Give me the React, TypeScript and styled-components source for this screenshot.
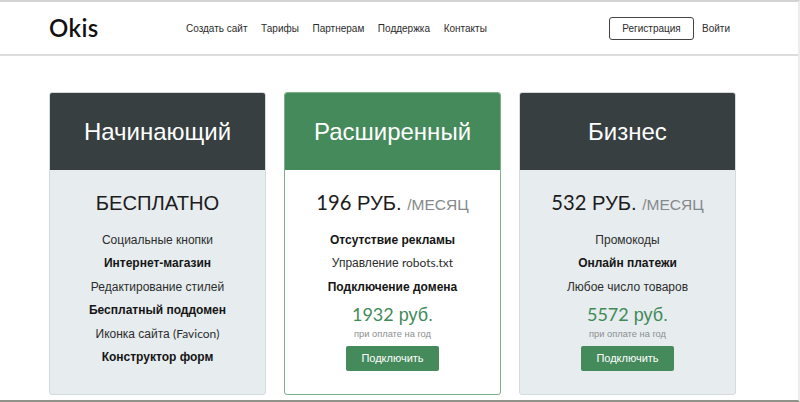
import React from "react";
import styled, { createGlobalStyle } from "styled-components";

const Global = createGlobalStyle`
  html, body { margin: 0; padding: 0; background: #fff; }
  body { width: 800px; height: 402px; overflow: hidden; font-family: "Liberation Sans", Arial, sans-serif; color: #1c1c1c; }
  * { box-sizing: border-box; }
`;

const Page = styled.div`
  width: 800px;
  height: 402px;
  display: flex;
  flex-direction: column;
  border-top: 2px solid #d4d4d4;
  border-bottom: 2px solid #8f9389;
  border-right: 2px solid #ececec;
  overflow: hidden;
`;

const Header = styled.header`
  height: 54px;
  flex: none;
  display: flex;
  align-items: center;
  padding: 0 68px 0 49px;
  border-bottom: 2px solid #dcdcdc;
`;

const Logo = styled.div`
  font-family: Lato, sans-serif;
  font-size: 24px;
  font-weight: 600;
  color: #111;
  width: 137px;
  letter-spacing: 0.4px;
  margin-top: -2px;
`;

const Nav = styled.nav`
  display: flex;
  gap: 13.6px;
  font-size: 10px;
  color: #2c2c2c;
`;

const NavLink = styled.a`
  display: block;
`;

const Actions = styled.div`
  margin-left: auto;
  display: flex;
  align-items: center;
  gap: 8px;
  font-size: 10px;
  color: #2c2c2c;
`;

const RegisterButton = styled.a`
  width: 85px;
  height: 23px;
  display: flex;
  align-items: center;
  justify-content: center;
  border: 1px solid #444;
  border-radius: 3px;
`;

const Plans = styled.main`
  display: grid;
  grid-template-columns: repeat(3, 217px);
  gap: 18px;
  padding: 36px 0 0 49px;
`;

const Plan = styled.section<{ $featured?: boolean }>`
  height: 303px;
  display: flex;
  flex-direction: column;
  border-radius: 3px;
  overflow: hidden;
  text-align: center;
  background: ${(p) => (p.$featured ? "#fff" : "#e7ecef")};
  border: 1px solid ${(p) => (p.$featured ? "#7fae8d" : "#d5dadc")};
`;

const PlanHead = styled.div<{ $featured?: boolean }>`
  height: 78px;
  flex: none;
  margin: -1px -1px 0;
  padding-top: 1px;
  display: flex;
  align-items: center;
  justify-content: center;
  font-size: 24px;
  color: #fff;
  background: ${(p) => (p.$featured ? "#458a5a" : "#373f41")};
`;

const PlanBody = styled.div`
  display: flex;
  flex-direction: column;
  align-items: center;
  padding-top: 21px;
`;

const Price = styled.div`
  height: 24px;
  font-size: 20.2px;
  line-height: 24px;
  color: #1c1c1c;
  margin-bottom: 14px;
  white-space: nowrap;
`;

const Period = styled.span`
  font-size: 15.5px;
  color: #85898b;
`;

const Latin = styled.span`
  font-family: Lato, sans-serif;
  line-height: 1;
`;

const Feature = styled.div<{ $bold?: boolean }>`
  height: 23.4px;
  font-size: 12px;
  line-height: 23.4px;
  font-weight: ${(p) => (p.$bold ? 700 : 400)};
  color: ${(p) => (p.$bold ? "#151515" : "#2c2c2c")};
`;

const YearPrice = styled.div`
  height: 22px;
  font-size: 18px;
  line-height: 22px;
  margin-top: 5px;
  color: #3f8a57;
`;

const YearNote = styled.div`
  font-size: 9.3px;
  line-height: 12px;
  margin-top: 2px;
  color: #8b8f90;
`;

const ConnectButton = styled.a`
  width: 93px;
  height: 25px;
  margin-top: 6px;
  padding-bottom: 1px;
  display: flex;
  align-items: center;
  justify-content: center;
  font-size: 11px;
  color: #fff;
  background: #458a5a;
  border-radius: 2px;
`;

type F = { t: string; latin?: string; b?: boolean };
type P = { title: string; amount?: string; price: string; period?: string; features: F[]; year?: string; featured?: boolean };

const plans: P[] = [
  {
    title: "Начинающий",
    price: "БЕСПЛАТНО",
    features: [
      { t: "Социальные кнопки" },
      { t: "Интернет-магазин", b: true },
      { t: "Редактирование стилей" },
      { t: "Бесплатный поддомен", b: true },
      { t: "Иконка сайта ", latin: "(Favicon)" },
      { t: "Конструктор форм", b: true },
    ],
  },
  {
    title: "Расширенный",
    amount: "196",
    price: " РУБ.",
    period: "/МЕСЯЦ",
    featured: true,
    year: "1932",
    features: [
      { t: "Отсутствие рекламы", b: true },
      { t: "Управление ", latin: "robots.txt" },
      { t: "Подключение домена", b: true },
    ],
  },
  {
    title: "Бизнес",
    amount: "532",
    price: " РУБ.",
    period: "/МЕСЯЦ",
    year: "5572",
    features: [
      { t: "Промокоды" },
      { t: "Онлайн платежи", b: true },
      { t: "Любое число товаров" },
    ],
  },
];

export default function App() {
  return (
    <Page>
      <Global />
      <Header>
        <Logo>Okis</Logo>
        <Nav>
          {["Создать сайт", "Тарифы", "Партнерам", "Поддержка", "Контакты"].map((n) => (
            <NavLink key={n}>{n}</NavLink>
          ))}
        </Nav>
        <Actions>
          <RegisterButton>Регистрация</RegisterButton>
          <NavLink>Войти</NavLink>
        </Actions>
      </Header>
      <Plans>
        {plans.map((p) => (
          <Plan key={p.title} $featured={p.featured}>
            <PlanHead $featured={p.featured}>{p.title}</PlanHead>
            <PlanBody>
              <Price>
                {p.amount && <Latin>{p.amount}</Latin>}
                {p.price}
                {p.period && <> <Period>{p.period}</Period></>}
              </Price>
              {p.features.map((f) => (
                <Feature key={f.t} $bold={f.b}>
                  {f.t}
                  {f.latin && <Latin>{f.latin}</Latin>}
                </Feature>
              ))}
              {p.year && (
                <>
                  <YearPrice><Latin>{p.year}</Latin> руб.</YearPrice>
                  <YearNote>при оплате на год</YearNote>
                  <ConnectButton>Подключить</ConnectButton>
                </>
              )}
            </PlanBody>
          </Plan>
        ))}
      </Plans>
    </Page>
  );
}
